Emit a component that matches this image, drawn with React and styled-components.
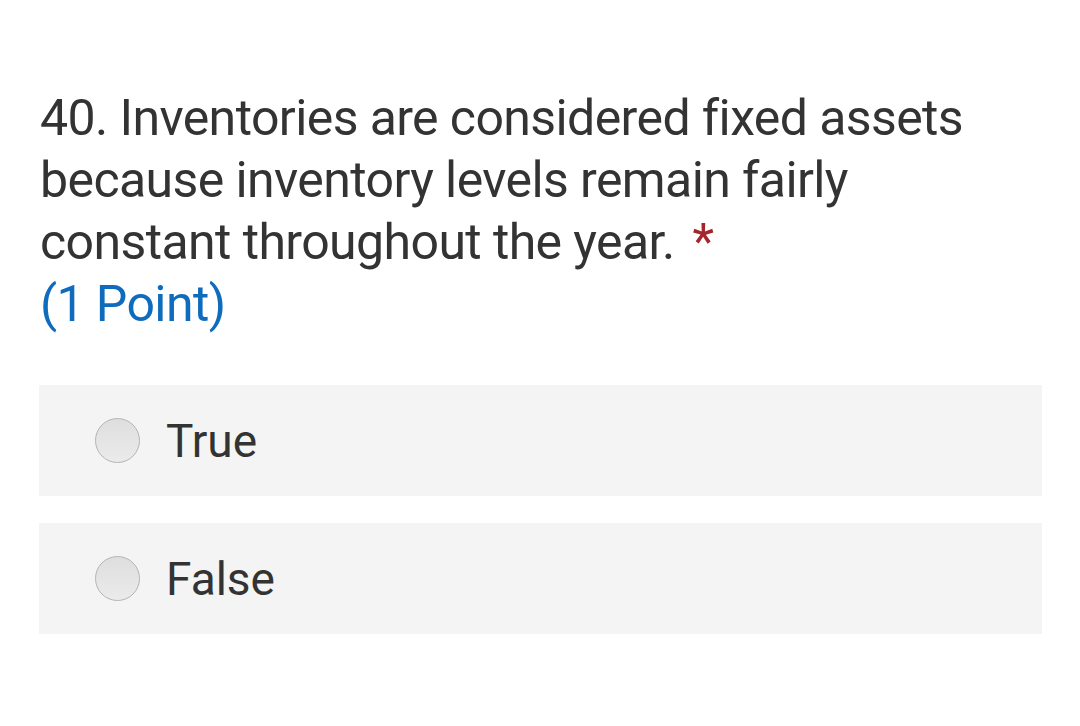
import React from 'react';
import styled, { createGlobalStyle } from 'styled-components';

const Global = createGlobalStyle`
  body {
    margin: 0;
    background: #fff;
    font-family: Roboto, "Noto Sans", sans-serif;
  }
`;

const Page = styled.div`
  width: 1080px;
  height: 726px;
  box-sizing: border-box;
  padding: 87px 38px 0 39px;
`;

const Question = styled.div`
  font-size: 50px;
  line-height: 62px;
  color: #333;
  padding-left: 1px;
  letter-spacing: -0.6px;
`;

const Required = styled.span`
  color: #a4262c;
  margin-left: 18px;
`;

const Points = styled.div`
  color: #0f6cbd;
`;

const Options = styled.div`
  margin-top: 50px;
  display: flex;
  flex-direction: column;
  gap: 27px;
`;

const Option = styled.label`
  display: flex;
  align-items: center;
  height: 111px;
  background: #f4f4f4;
  padding-left: 56px;
  gap: 26px;
  cursor: pointer;
`;

const Radio = styled.span`
  width: 45px;
  height: 45px;
  border-radius: 50%;
  border: 1px solid #b4b4b4;
  background: linear-gradient(#dedede, #ebebeb);
  box-sizing: border-box;
`;

const Label = styled.span`
  font-size: 46px;
  color: #333;
`;

export default function App() {
  return (
    <Page>
      <Global />
      <Question>
        40. Inventories are considered fixed assets because inventory levels remain fairly
        constant throughout the year.<Required>*</Required>
        <Points>(1 Point)</Points>
      </Question>
      <Options>
        <Option>
          <Radio />
          <Label>True</Label>
        </Option>
        <Option>
          <Radio />
          <Label>False</Label>
        </Option>
      </Options>
    </Page>
  );
}
